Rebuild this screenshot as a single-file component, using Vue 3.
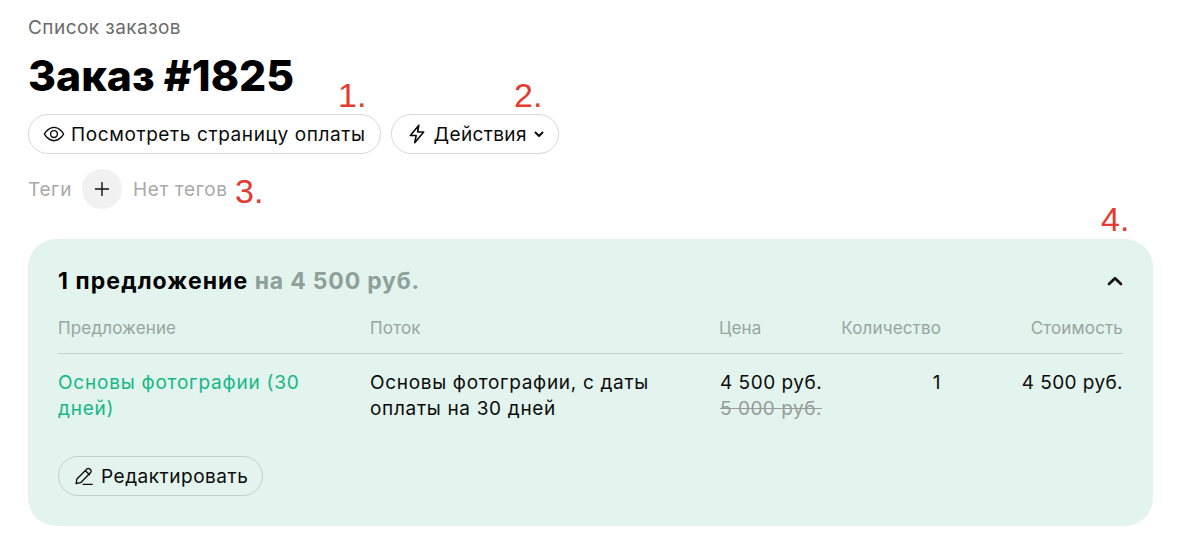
<script setup>
const notes = [
  { id: 1, text: '1.', cls: 'n1' },
  { id: 2, text: '2.', cls: 'n2' },
  { id: 3, text: '3.', cls: 'n3' },
  { id: 4, text: '4.', cls: 'n4' },
]
</script>

<template>
  <div class="page">
    <a class="crumb">Список заказов</a>
    <h1 class="title">Заказ #1825</h1>
    <div class="actions">
      <button class="btn pay">
        <svg class="ic" viewBox="0 0 24 24" fill="none" stroke="currentColor" stroke-width="1.7" stroke-linecap="round" stroke-linejoin="round"><path d="M.5 12s4-8 11.500-8 11.500 8 11.500 8-4 8-11.500 8S.5 12 .5 12z"/><circle cx="12" cy="12" r="4.100"/></svg>
        <span>Посмотреть страницу оплаты</span>
      </button>
      <button class="btn tight">
        <svg class="ic" viewBox="0 0 24 24" fill="none" stroke="currentColor" stroke-width="1.9" stroke-linejoin="round"><path d="M14.2 1.500 4 13.800h7L9.300 22.500 20 9.600h-7.200z"/></svg>
        <span>Действия</span>
        <svg class="chev" viewBox="0 0 12 12" fill="none" stroke="currentColor" stroke-width="2" stroke-linecap="round" stroke-linejoin="round"><path d="M2.500 4.500 6 8l3.500-3.500"/></svg>
      </button>
    </div>
    <div class="tags">
      <span class="muted">Теги</span>
      <button class="add">
        <svg viewBox="0 0 16 16" width="16" height="16" fill="none" stroke="#111" stroke-width="1.4"><path d="M8 1v14M1 8h14"/></svg>
      </button>
      <span class="muted">Нет тегов</span>
    </div>

    <section class="card">
      <header class="card-head">
        <div class="summary"><span class="count">1 предложение</span> <span class="sum">на 4 500 руб.</span></div>
        <svg class="up" viewBox="0 0 16 10" fill="none" stroke="#0b0b0b" stroke-width="2.6" stroke-linecap="round" stroke-linejoin="round"><path d="M2 8 8 2.200 14 8"/></svg>
      </header>
      <div class="grid head">
        <div>Предложение</div>
        <div>Поток</div>
        <div>Цена</div>
        <div class="right">Количество</div>
        <div class="right">Стоимость</div>
      </div>
      <div class="grid row">
        <div class="link">Основы фотографии (30 дней)</div>
        <div class="flow">Основы фотографии, с даты оплаты на 30 дней</div>
        <div class="price">
          <div>4 500 руб.</div>
          <div class="old">5 000 руб.</div>
        </div>
        <div class="right">1</div>
        <div class="right total">4 500 руб.</div>
      </div>
      <button class="btn edit">
        <svg class="ic" viewBox="0 0 24 24" fill="none" stroke="currentColor" stroke-width="1.6" stroke-linecap="round" stroke-linejoin="round"><path d="M2.500 21l1-5.500L15.500 3.500a2.400 2.400 0 0 1 3.400 0l1 1a2.400 2.400 0 0 1 0 3.400L8 20zM13.500 5.500l5 5M11 22h11"/></svg>
        <span>Редактировать</span>
      </button>
    </section>

    <span v-for="n in notes" :key="n.id" class="note" :class="n.cls">{{ n.text }}</span>
  </div>
</template>

<style>
html, body { margin: 0; background: #fff; }
</style>

<style scoped>
.page {
  position: relative;
  box-sizing: border-box;
  width: 1179px;
  height: 543px;
  padding: 16px 26px 0 28px;
  font-family: "Inter", "Noto Sans", sans-serif;
  font-size: 19px;
  letter-spacing: 0.6px;
  color: #0b0b0b;
  overflow: hidden;
}
.crumb { display: block; font-size: 19px; letter-spacing: 0.45px; line-height: 23px; color: #6b6b6b; }
.title {
  margin: 13px 0 14px;
  font-size: 42.7px;
  letter-spacing: 0;
  line-height: 48px;
  font-weight: 800;
  color: #000;
}
.actions { display: flex; gap: 10px; }
.btn {
  display: inline-flex;
  align-items: center;
  height: 40px;
  box-sizing: border-box;
  padding: 0 15px;
  background: transparent;
  border: 1px solid #d8d8d8;
  border-radius: 20px;
  font: inherit;
  letter-spacing: inherit;
  color: inherit;
  gap: 7px;
}
.pay { padding-right: 14px; }
.tight { padding-right: 13px; letter-spacing: 0.35px; }
.tight .chev { margin-left: -1px; }
.ic { width: 20px; height: 20px; flex: none; overflow: visible; }
.chev { width: 12px; height: 12px; flex: none; }
.tags { display: flex; align-items: center; margin-top: 15px; gap: 10px; }
.muted { color: #a9a9a9; }
.tags .muted:last-child { margin-left: 1px; }
.add {
  width: 40px; height: 40px; padding: 0; border: 0; border-radius: 50%;
  background: #f1f1f1; display: flex; align-items: center; justify-content: center;
}
.card {
  box-sizing: border-box;
  margin-top: 30px;
  width: 1125px;
  height: 287px;
  padding: 28px 30px 0;
  border-radius: 28px;
  background: #e3f3ed;
}
.card-head { display: flex; justify-content: space-between; align-items: center; height: 28px; }
.summary { font-size: 23px; letter-spacing: 0.95px; font-weight: 700; color: #000; }
.count { letter-spacing: 1.1px; }
.sum { color: #8f9f99; letter-spacing: 0.8px; }
.up { width: 16px; height: 10px; }
.grid { display: grid; grid-template-columns: 312px 349px 102px 120px 1fr; }
.right { text-align: right; white-space: nowrap; }
.head {
  margin-top: 22px;
  padding-bottom: 14px;
  font-size: 17px;
  letter-spacing: 0.15px;
  line-height: 22px;
  color: #98a5a0;
  border-bottom: 1px solid #c3d0cb;
}
.row { padding-top: 16px; line-height: 26px; }
.link { color: #14b885; padding-right: 20px; letter-spacing: 0.78px; }
.flow { padding-right: 40px; letter-spacing: 0.68px; }
.price { white-space: nowrap; padding-left: 1px; letter-spacing: 0.5px; }
.total { letter-spacing: 0.4px; }
.old { color: #969c99; text-decoration: line-through; line-height: 26px; }
.edit { margin-top: 34px; height: 40px; padding-right: 14px; background: transparent; border-color: #c3d0cb; letter-spacing: 0.52px; }
.note {
  position: absolute;
  font-family: "Liberation Sans", sans-serif;
  font-size: 34px;
  letter-spacing: 0;
  line-height: 40px;
  color: #e53a2f;
}
.n1 { left: 338px; top: 75px; }
.n2 { left: 514px; top: 75px; }
.n3 { left: 235px; top: 171px; }
.n4 { left: 1101px; top: 199px; }
</style>
